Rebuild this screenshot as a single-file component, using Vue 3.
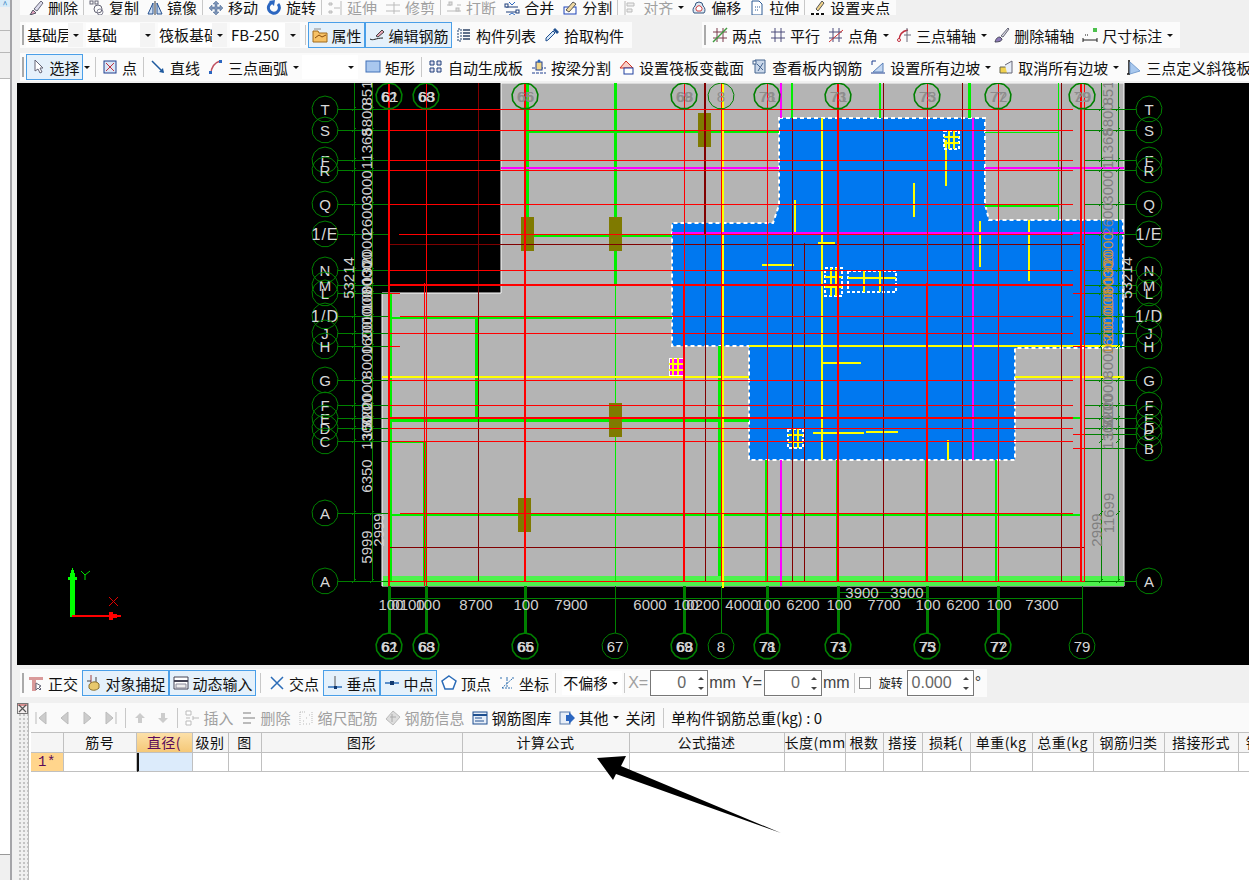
<script setup>
// toolbar icons, 16x16
const icons = {
  del: '<path d="M2 15l3-5 3 3z" fill="#e6a6c0" stroke="#556"/><path d="M6 9l7-8 2 2-6 8z" fill="#dde" stroke="#667"/>',
  copy: '<circle cx="9" cy="9" r="4" fill="none" stroke="#667"/><circle cx="11" cy="12" r="3" fill="none" stroke="#889"/><rect x="1" y="1" width="3" height="3" fill="#fff" stroke="#667"/><rect x="6" y="1" width="3" height="3" fill="#fff" stroke="#667"/>',
  mirror: '<path d="M8 1v14" stroke="#333"/><path d="M6 3v11H1zM10 3v11h5z" fill="#cfe0f5" stroke="#25508f"/>',
  move: '<path d="M8 1l3 3H9v3h3V5l3 3-3 3V9H9v3h2l-3 3-3-3h2V9H4v2L1 8l3-3v2h3V4H5z" fill="#7c93b6" stroke="#4b6a94" stroke-width=".5"/>',
  rotate: '<path d="M12 4a5.5 5.5 0 1 1-6-1.5" fill="none" stroke="#2b66c0" stroke-width="3"/><path d="M3 1l6-1-1 6z" fill="#2b66c0"/>',
  extend: '<path d="M2 3h3v2H2zM2 11h3v2H2zM7 8h6M14 1v14" stroke="#bbb" fill="#ddd"/>',
  trim: '<path d="M1 5h14M1 11h14M9 2v12" stroke="#bbb" fill="none"/>',
  brk: '<path d="M1 5h4M11 5h4M1 11h14" stroke="#bbb" fill="none"/><rect x="3" y="2" width="3" height="3" fill="#ddd" stroke="#bbb"/><rect x="10" y="8" width="3" height="3" fill="#ddd" stroke="#bbb"/>',
  merge: '<path d="M2 7h12M2 12h12" stroke="#1f3f7a"/><path d="M5 2l3 3 3-3M5 15l3-2 3 2" stroke="#2b66c0" fill="none"/><rect x="1" y="4" width="3" height="3" fill="#fff" stroke="#1f3f7a"/><rect x="12" y="10" width="3" height="3" fill="#fff" stroke="#1f3f7a"/>',
  split: '<rect x="2" y="7" width="12" height="7" fill="none" stroke="#1d43b8"/><path d="M4 10l7-8 3 2-7 8z" fill="#f0d9a0" stroke="#555"/>',
  align: '<path d="M2 1v14" stroke="#bbb"/><path d="M4 3h7v3H4zM4 9h5v3H4z" fill="#eee" stroke="#bbb"/>',
  offset: '<path d="M3 13a5 5 0 0 1 1-7 4 4 0 0 1 8 0 5 5 0 0 1 1 7z" fill="#dce7f2" stroke="#35557f"/><path d="M6 11a3 3 0 1 1 4 0z" fill="#fff" stroke="#d04040"/>',
  stretch: '<path d="M3 1h7l3 3v11H3z" fill="#fff" stroke="#2c5a94"/><path d="M6 7h5M6 10h3" stroke="#2c5a94" stroke-dasharray="1 1"/>',
  gripset: '<path d="M6 9l6-8 2 2-6 8z" fill="#f2d48a" stroke="#555"/><path d="M1 14h3M6 14h3M11 14h3" stroke="#111" stroke-width="2"/>',
  attr: '<path d="M1 4h5l1 2h8v9H1z" fill="#f7c266" stroke="#a06a1c"/><path d="M3 11l4-3 3 2 4-2" fill="none" stroke="#8a4c0c"/><path d="M2 2h7" stroke="#8a8a8a"/>',
  rebar: '<path d="M1 12c3 2 6-1 13-1" fill="none" stroke="#222"/><path d="M7 9l6-6 2 2-6 5z" fill="#e7a4b4" stroke="#444"/>',
  list: '<path d="M2 2h3v12H2z" fill="none" stroke="#1d3e6d" stroke-dasharray="2 1"/><path d="M7 3h7M7 6h7M7 9h7M7 12h7" stroke="#60708a" stroke-width="2"/>',
  pick: '<path d="M2 14l2-1 7-7-2-2-7 7z" fill="#d8e8f8" stroke="#20508f"/><path d="M9 3l2-2 4 4-2 2z" fill="#20508f"/>',
  two: '<path d="M1 5h14M1 11h14M5 1v14M11 1v14" stroke="#7a3a4a"/><path d="M1 15L15 1" stroke="#3f9a3f" stroke-width="1.5"/>',
  par: '<path d="M1 5h14M1 11h14M5 1v14M11 1v14" stroke="#4a4a7a"/>',
  ang: '<path d="M1 5h13M1 11h13M5 1v14M11 1v14" stroke="#4a4a7a"/><path d="M1 15L15 3" stroke="#d03030"/>',
  arc3: '<path d="M3 14c0-7 3-10 9-11" fill="none" stroke="#c03040" stroke-width="1.5"/><path d="M8 8h7M11 1v14" stroke="#6a6a7a"/><circle cx="3" cy="13" r="1.5" fill="#fff" stroke="#c03040"/>',
  brush: '<path d="M1 15c1-4 3-5 5-5l2 2c0 2-3 3-7 3z" fill="#8d7ab8" stroke="#445"/><path d="M7 9l7-8 1 1-6 8z" fill="#d8d8e0" stroke="#667"/>',
  dim: '<path d="M1 13h14M1 11v4M15 11v4" stroke="#222"/><path d="M3 8h3" stroke="#111" stroke-dasharray="1 1"/><rect x="11" y="1" width="4" height="4" fill="#4cc04c"/>',
  cursor: '<path d="M5 1v11l3-2 2 4 2-1-2-4h3z" fill="#fff" stroke="#667"/>',
  point: '<rect x="2" y="2" width="12" height="12" fill="#dbe6f5" stroke="#1f3f8f"/><path d="M4 4l8 8M12 4l-8 8" stroke="#c03040"/>',
  line: '<path d="M2 2l11 11" stroke="#1f5a9f" stroke-width="1.5"/><path d="M14 14l-5-1 4-4z" fill="#1f5a9f"/>',
  arc: '<path d="M3 15c0-7 3-11 9-13" fill="none" stroke="#c05060" stroke-width="1.5"/><rect x="1" y="12" width="3" height="3" fill="#2b66c0"/><rect x="11" y="1" width="3" height="3" fill="#2b66c0"/>',
  rect: '<rect x="1" y="2" width="14" height="11" fill="#a9c7ee" stroke="#4070b8"/>',
  four: '<path d="M2 2h4v4H2zM9 2h4v4H9zM2 9h4v4H2zM9 9h4v4H9z" fill="#dde" stroke="#1f3f7a"/>',
  beam: '<path d="M1 9h14M1 14h14" stroke="#1f3f8f" stroke-dasharray="3 1"/><rect x="5" y="3" width="6" height="8" fill="#f2d78a" stroke="#1f3f8f"/><circle cx="8" cy="2" r="1.5" fill="#2b66c0"/>',
  sect: '<path d="M1 9l6-7 7 7z" fill="#f9d0c8" stroke="#d03020"/><rect x="5" y="9" width="9" height="6" fill="#fff" stroke="#2040a0"/>',
  view: '<path d="M3 1h10v13H3z" fill="#cad8ea" stroke="#45648f"/><path d="M5 5l6 6M11 4l-5 8" stroke="#45648f"/><rect x="1" y="2" width="3" height="3" fill="#fff" stroke="#45648f"/>',
  slope: '<path d="M2 2h4M2 2v4M1 14h14" stroke="#1f3f8f"/><path d="M3 13L13 4v9z" fill="#c4d8f2" stroke="#5a80b8"/>',
  unslope: '<path d="M2 8h8v6H2z" fill="#f2d24f" stroke="#665"/><path d="M7 6l7-4v12H9" fill="#e8eef8" stroke="#667"/>',
  tri: '<path d="M3 1v14M1 15h3" stroke="#111" stroke-width="1.5"/><path d="M4 3l10 9-10 3z" fill="#a8c8ee" stroke="#7aa0d0"/>',
  ortho: '<path d="M1 2h14v3H8v11H4V5H1z" fill="#d99a9a"/><path d="M8 8v7l2-2 2 2 1-1-2-2 2-1z" fill="#fff" stroke="#667"/>',
  snap: '<path d="M5 0v9" stroke="#a04040"/><path d="M1 6h4M10 2v7" stroke="#444"/><path d="M3 10c2-4 8-4 10-1v4c-3 3-8 3-10 0z" fill="#e8c86c" stroke="#8a7030"/>',
  dyn: '<path d="M1 2h14v12H1z" fill="#fff" stroke="#445"/><path d="M1 6h14" stroke="#445" stroke-width="2"/><path d="M3 9h10v4H3z" fill="#eee" stroke="#889"/>',
  cross: '<path d="M2 2l12 12M14 2L2 14" stroke="#2b6cb8" stroke-width="1.5"/>',
  perp: '<path d="M1 12h14" stroke="#2b6cb8" stroke-width="1.5"/><path d="M8 1v11" stroke="#555"/><rect x="7" y="11" width="3" height="3" fill="#123a70"/>',
  mid: '<path d="M1 8h14" stroke="#2b6cb8" stroke-width="1.5"/><rect x="6" y="6" width="4" height="4" fill="#123a70"/>',
  vertex: '<path d="M8 1l7 5-3 8H4L1 6z" fill="#fff" stroke="#2b6cb8" stroke-width="1.5"/>',
  coord: '<path d="M1 3h2M7 3h2M13 3h2M3 13h10M8 4v9M13 4L3 13" stroke="#3070b0" stroke-dasharray="2 1" fill="none"/>',
  first: '<path d="M3 2v12M13 2L6 8l7 6z" fill="#ccc" stroke="#bbb"/>',
  prev: '<path d="M12 2L5 8l7 6z" fill="#ccc" stroke="#bbb"/>',
  next: '<path d="M4 2l7 6-7 6z" fill="#ccc" stroke="#bbb"/>',
  last: '<path d="M13 2v12M3 2l7 6-7 6z" fill="#ccc" stroke="#bbb"/>',
  up: '<path d="M8 3l5 5h-3v5H6V8H3z" fill="#ccc"/>',
  down: '<path d="M8 13l5-5h-3V3H6v5H3z" fill="#ccc"/>',
  ins: '<path d="M2 1h5v4H2zM2 11h5v4H2z" fill="#fff" stroke="#bbb"/><path d="M9 8h6M9 6v4M2 8h4" stroke="#bbb"/>',
  rem: '<path d="M2 3h8M2 13h8M2 8h12" stroke="#bbb" stroke-width="2"/>',
  scale: '<path d="M2 2v13M2 2h5M5 14h1M8 14h1M11 14h1M5 11h1M8 8h1M11 5h1M14 2v12" stroke="#bbb" stroke-dasharray="1 1"/>',
  info: '<path d="M8 1l7 6-7 8-7-6z" fill="#ddd" stroke="#bbb"/><path d="M5 7h6M7 4v8" stroke="#aaa"/>',
  lib: '<rect x="1" y="2" width="14" height="12" fill="#e7eef8" stroke="#1f4f8f"/><path d="M1 5h14" stroke="#1f4f8f" stroke-width="2"/><path d="M3 8h7M3 11h9" stroke="#1f4f8f"/>',
  other: '<rect x="1" y="2" width="10" height="12" fill="#e7eef8" stroke="#5a7aa8"/><path d="M7 5h3V2l6 6-6 6v-3H7z" fill="#2b66c0"/>'
}

const item = (text, icon, extra = {}) => ({ text, icon, ...extra })
const sep = { k: 'sep' }
const sepWide = { k: 'sep', wide: true }
const caret = { k: 'caret' }
const handle = { k: 'handle' }

const bar1 = [
  item('删除', 'del'), sep, item('复制', 'copy'), item('镜像', 'mirror'), sep,
  item('移动', 'move'), item('旋转', 'rotate'), sep,
  item('延伸', 'extend', { off: true }), item('修剪', 'trim', { off: true }), sep,
  item('打断', 'brk', { off: true }), item('合并', 'merge'), item('分割', 'split'), sep,
  item('对齐', 'align', { off: true }), caret, item('偏移', 'offset'), item('拉伸', 'stretch'), sep,
  item('设置夹点', 'gripset')
]
const bar2 = [
  handle,
  { k: 'combo', text: '基础层', w: 57 },
  { k: 'combo', text: '基础', w: 69 },
  { k: 'combo', text: '筏板基础', w: 69 },
  { k: 'combo', text: 'FB-250', w: 70 },
  sep,
  item('属性', 'attr', { on: true }), item('编辑钢筋', 'rebar', { on: true }),
  item('构件列表', 'list'), item('拾取构件', 'pick')
]
const bar2b = [
  handle,
  item('两点', 'two'), item('平行', 'par'), item('点角', 'ang'), caret,
  item('三点辅轴', 'arc3'), caret, item('删除辅轴', 'brush'), item('尺寸标注', 'dim'), caret
]
const bar3 = [
  handle,
  item('选择', 'cursor', { on: true }), caret, sep, item('点', 'point'), sep,
  item('直线', 'line'), item('三点画弧', 'arc'), caret,
  { k: 'combo', text: '', w: 56 },
  item('矩形', 'rect'), sep, item('自动生成板', 'four'), item('按梁分割', 'beam'),
  item('设置筏板变截面', 'sect'), item('查看板内钢筋', 'view'), item('设置所有边坡', 'slope'), caret,
  item('取消所有边坡', 'unslope'), caret, item('三点定义斜筏板', 'tri')
]
const statusBar = [
  handle,
  item('正交', 'ortho'), item('对象捕捉', 'snap', { on: true }), item('动态输入', 'dyn', { on: true }), sepWide,
  item('交点', 'cross'), item('垂点', 'perp', { on: true }), item('中点', 'mid', { on: true }),
  item('顶点', 'vertex'), item('坐标', 'coord'), sep,
  { k: 'combo', text: '不偏移', w: 60 }, sep,
  { k: 'lbl', text: 'X=', off: true }, { k: 'spin', text: '0', w: 58 }, { k: 'lbl', text: 'mm Y=' },
  { k: 'spin', text: '0', w: 58 }, { k: 'lbl', text: 'mm' }, sep,
  { k: 'check' }, { k: 'lbl', text: '旋转', small: true },
  { k: 'spin', text: '0.000', w: 67 }, { k: 'lbl', text: '°' }
]
const panelBar = [
  item('', 'first', { off: true }), item('', 'prev', { off: true }), item('', 'next', { off: true }), item('', 'last', { off: true }), sep,
  item('', 'up', { off: true }), item('', 'down', { off: true }), sep,
  item('插入', 'ins', { off: true }), item('删除', 'rem', { off: true }), item('缩尺配筋', 'scale', { off: true }),
  item('钢筋信息', 'info', { off: true }), item('钢筋图库', 'lib'), item('其他', 'other'), caret,
  item('关闭', ''), sepWide, { k: 'lbl', text: '单构件钢筋总重(kg) : 0' }
]
const bars = [
  { id: 'b1', items: bar1 },
  { id: 'b2', items: bar2 },
  { id: 'b2b', items: bar2b },
  { id: 'b3', items: bar3 },
  { id: 'bs', items: statusBar }
]
const barOf = id => bars.find(b => b.id === id).items

const heads = ['', '筋号', '直径(', '级别', '图', '图形', '计算公式', '公式描述', '长度(mm', '根数', '搭接', '损耗(', '单重(kg', '总重(kg', '钢筋归类', '搭接形式', '钢']

// canvas geometry uses screen coordinates, viewBox starts at the canvas corner
const rowsL = [['T', 109], ['S', 130], ['F', 160], ['R', 170], ['Q', 204], ['1/E', 234], ['N', 270], ['M', 285], ['L', 293], ['1/D', 316], ['J', 333], ['H', 346], ['G', 380], ['F', 405], ['E', 418], ['D', 428], ['C', 441], ['A', 513], ['A', 581]]
const rowsR = [...rowsL.slice(0, 16), ['C', 434], ['B', 448], ['A', 581]]
const colsTop = [[389, '62', '61'], [426, '68', '63'], [525, '65', '66'], [684, '69', '68'], [721, '8'], [767, '78', '71'], [838, '73', '71'], [927, '75', '73'], [998, '77', '72'], [1082, '79', '29']]
const colsBottom = [[389, '62', '61'], [426, '68', '63'], [525, '65', '66'], [615, '67'], [684, '69', '68'], [721, '8'], [767, '78', '71'], [838, '73', '71'], [927, '75', '73'], [998, '77', '72'], [1082, '79']]

const octagon = (cx, cy, r = 13) => {
  const pts = []
  for (let i = 0; i < 13; i++) {
    const a = (i / 13) * Math.PI * 2 - Math.PI / 2
    pts.push((cx + r * Math.cos(a)).toFixed(1) + ',' + (cy + r * Math.sin(a)).toFixed(1))
  }
  return pts.join(' ')
}

const G = '#00ee00'
const DG = '#008000'
const Y = '#ffff00'
const M = '#ff00ff'
const R = '#ff0000'
const D = '#800000'

// [x1, y1, x2, y2, colour, width]
const lines = [
  // dimension and leader lines
  [354, 83, 354, 581, DG, 1], [372, 83, 372, 581, DG, 1], [1101, 83, 1101, 581, DG, 1], [1118, 83, 1118, 581, DG, 1],
  [389, 598, 1082, 598, DG, 1], [838, 592, 927, 592, DG, 1],
  ...rowsL.map(r => [338, r[1], 388, r[1], DG, 1]),
  ...rowsR.map(r => [1085, r[1], 1136, r[1], DG, 1]),
  ...colsBottom.map(c => [c[0], 586, c[0], 633, DG, c[2] ? 3 : 1]),
  // green walls
  [527, 83, 527, 217, G, 3], [524, 251, 524, 581, G, 1], [615, 83, 615, 285, G, 3], [615, 285, 615, 581, G, 1],
  [476, 316, 476, 418, G, 3], [391, 293, 391, 581, G, 2], [424, 441, 424, 581, G, 3],
  [719, 346, 719, 576, G, 3], [766, 460, 766, 581, G, 3], [837, 460, 837, 581, G, 2], [926, 460, 926, 581, G, 2], [996, 460, 996, 581, G, 2],
  [792, 83, 792, 118, G, 2], [880, 83, 880, 118, G, 2], [969, 83, 969, 118, G, 3], [1058, 83, 1058, 220, G, 1],
  [527, 132, 779, 132, G, 2], [985, 132, 1058, 132, G, 1], [985, 206, 1058, 206, G, 2],
  [527, 236, 672, 236, G, 2], [390, 318, 672, 318, G, 2], [390, 420, 749, 420, G, 3], [1015, 418, 1080, 418, G, 2],
  [390, 442, 424, 442, G, 2], [390, 515, 1080, 515, G, 2],
  // yellow and magenta
  [723, 83, 723, 588, Y, 2], [382, 377, 749, 377, Y, 2], [1015, 377, 1124, 377, Y, 2], [749, 346, 1120, 346, Y, 2],
  [822, 118, 822, 460, Y, 2], [795, 200, 795, 234, Y, 2], [914, 183, 914, 217, Y, 2], [946, 140, 946, 186, Y, 2],
  [980, 221, 980, 267, Y, 2], [1029, 220, 1029, 281, Y, 2], [818, 243, 835, 243, Y, 2], [762, 265, 794, 265, Y, 2],
  [822, 363, 861, 363, Y, 2], [813, 433, 864, 433, Y, 2], [866, 432, 898, 432, Y, 2], [948, 440, 948, 460, Y, 2],
  [501, 168, 779, 168, M, 2], [985, 168, 1124, 168, M, 2], [672, 233, 1124, 233, M, 2],
  [973, 118, 973, 460, M, 2], [781, 83, 781, 118, M, 2], [781, 460, 781, 586, M, 2]
]

const topLines = [
  // dark red
  [478, 83, 478, 581, D, 1], [705, 83, 705, 234, D, 2], [705, 234, 705, 581, D, 1], [792, 118, 792, 581, D, 1], [804, 243, 804, 581, D, 1],
  [883, 83, 883, 581, D, 1], [962, 83, 962, 581, D, 1], [1061, 83, 1061, 581, D, 1],
  [388, 244, 1085, 244, D, 1], [388, 547, 1085, 547, D, 1],
  // red vertical grid
  [389, 83, 389, 586, R, 2], [426, 83, 426, 586, R, 1], [424, 283, 424, 586, R, 1], [525, 83, 525, 581, R, 2],
  [684, 83, 684, 285, R, 1], [684, 285, 684, 581, R, 2], [721, 83, 721, 581, R, 1], [767, 83, 767, 581, R, 1],
  [838, 83, 838, 581, R, 2], [927, 83, 927, 283, R, 1], [927, 283, 927, 581, R, 2], [998, 83, 998, 581, R, 1],
  [1081, 83, 1081, 581, R, 2], [1084, 83, 1084, 581, R, 1],
  // red horizontal grid
  ...[109, 130, 160, 170, 204, 270, 333, 380, 405, 428, 441].map(y => [388, y, 1073, y, R, 1]),
  [399, 234, 1073, 234, R, 1], [388, 285, 1073, 285, R, 2], [400, 316, 1073, 316, R, 1], [388, 418, 1073, 418, R, 2], [400, 513, 1073, 513, R, 1],
  [388, 293, 400, 293, R, 1], [388, 346, 400, 346, R, 1], [1073, 293, 1085, 293, R, 1], [1073, 346, 1085, 346, R, 1],
  [1073, 434, 1085, 434, R, 1], [1073, 448, 1085, 448, R, 1], [388, 581, 1085, 581, R, 1]
]

const ticks = [354, 372, 1101, 1118].flatMap(x => rowsL.map(r => [x - 2, r[1] + 2, x + 2, r[1] - 2]))

const columns = [[698, 113], [521, 217], [609, 217], [609, 403], [518, 498]]

// hatched opening boxes: [x, y, w, h]
const hatches = [[944, 131, 15, 18], [825, 268, 17, 28], [848, 271, 48, 21], [788, 429, 15, 19]]

const dimStack = [[93, '851'], [119, '5800'], [145, '1368'], [165, '1'], [187, '3000'], [219, '2600'], [249, '2000'], [268, '1300'], [278, '8000'], [294, '1000'], [306, '1000'], [325, '2000'], [338, '1600'], [362, '8000'], [393, '2000'], [411, '3200'], [423, '1500'], [433, '1300']]
const bottomDims = [[391, '100'], [408, '0100'], [428, '100'], [476, '8700'], [526, '100'], [571, '7900'], [650, '6000'], [686, '100'], [703, '0200'], [742, '4000'], [768, '100'], [803, '6200'], [839, '100'], [884, '7700'], [928, '100'], [963, '6200'], [999, '100'], [1042, '7300']]
const rot = (x, y) => `rotate(-90 ${x} ${y})`
const orangeAt = y => y > 225 && y < 345
</script>

<template>
  <div class="app">
    <aside class="side">
      <div class="side-tab">^</div>
      <div class="side-btn first"></div>
      <div class="side-btn"></div>
      <div class="side-btn last"></div>
      <div class="side-white"></div>
      <div class="side-foot"></div>
    </aside>

    <div class="main">
      <div class="row row1">
        <div class="bar">
          <template v-for="(it, i) in barOf('b1')" :key="i">
            <span v-if="it.k === 'sep'" class="sep"></span>
            <span v-else-if="it.k === 'caret'" class="caret"></span>
            <span v-else class="btn" :class="{ off: it.off }">
              <svg class="ic" viewBox="0 0 16 16" v-html="icons[it.icon]"></svg>{{ it.text }}
            </span>
          </template>
        </div>
      </div>

      <div class="row row2">
        <div class="bar bar-left">
          <template v-for="(it, i) in barOf('b2')" :key="i">
            <span v-if="it.k === 'handle'" class="handle"></span>
            <span v-else-if="it.k === 'sep'" class="sep"></span>
            <span v-else-if="it.k === 'combo'" class="combo" :style="{ width: it.w + 'px' }">
              <span class="combo-text">{{ it.text }}</span><span class="combo-arrow"><i class="caret"></i></span>
            </span>
            <span v-else class="btn" :class="{ on: it.on }">
              <svg class="ic" viewBox="0 0 16 16" v-html="icons[it.icon]"></svg>{{ it.text }}
            </span>
          </template>
        </div>
        <div class="bar bar-right">
          <template v-for="(it, i) in barOf('b2b')" :key="i">
            <span v-if="it.k === 'handle'" class="handle"></span>
            <span v-else-if="it.k === 'caret'" class="caret"></span>
            <span v-else class="btn">
              <svg class="ic" viewBox="0 0 16 16" v-html="icons[it.icon]"></svg>{{ it.text }}
            </span>
          </template>
        </div>
      </div>

      <div class="row row3">
        <div class="bar bar-full">
          <template v-for="(it, i) in barOf('b3')" :key="i">
            <span v-if="it.k === 'handle'" class="handle"></span>
            <span v-else-if="it.k === 'sep'" class="sep"></span>
            <span v-else-if="it.k === 'caret'" class="caret"></span>
            <span v-else-if="it.k === 'combo'" class="combo" :style="{ width: it.w + 'px' }">
              <span class="combo-text">{{ it.text }}</span><span class="combo-arrow white"><i class="caret"></i></span>
            </span>
            <span v-else class="btn" :class="{ on: it.on }">
              <svg class="ic" viewBox="0 0 16 16" v-html="icons[it.icon]"></svg>{{ it.text }}
            </span>
          </template>
        </div>
      </div>

      <svg class="cad" viewBox="17 83 1232 582" width="1232" height="582">
        <polygon points="501,83 1124,83 1124,586 382,586 382,293 501,293" fill="#b4b4b4" stroke="#fff" stroke-width="1" />
        <rect x="383" y="576" width="741" height="10" fill="#4df24d" />
        <polygon
          points="779,118 985,118 985,204 989,220 1123,220 1123,348 1015,348 1015,460 749,460 749,346 672,346 672,223 773,223 779,205"
          fill="#0078f0" stroke="#fff" stroke-width="2" stroke-dasharray="4 3"
        />
        <g shape-rendering="crispEdges">
          <line v-for="(l, i) in lines" :key="i" :x1="l[0]" :y1="l[1]" :x2="l[2]" :y2="l[3]" :stroke="l[4]" :stroke-width="l[5]" />
          <rect v-for="(c, i) in columns" :key="'c' + i" :x="c[0]" :y="c[1]" width="13" height="34" fill="#7f7a00" />
          <g v-for="(h, i) in hatches" :key="'h' + i">
            <rect :x="h[0]" :y="h[1]" :width="h[2]" :height="h[3]" fill="none" stroke="#fff" stroke-width="1.5" stroke-dasharray="3 2" />
            <line :x1="h[0]" :y1="h[1] + h[3] / 3" :x2="h[0] + h[2]" :y2="h[1] + h[3] / 3" stroke="#ff0" stroke-width="2" />
            <line :x1="h[0]" :y1="h[1] + h[3] * 2 / 3" :x2="h[0] + h[2]" :y2="h[1] + h[3] * 2 / 3" stroke="#ff0" stroke-width="2" />
            <line :x1="h[0] + h[2] / 3" :y1="h[1]" :x2="h[0] + h[2] / 3" :y2="h[1] + h[3]" stroke="#ff0" stroke-width="2" />
            <line :x1="h[0] + h[2] * 2 / 3" :y1="h[1]" :x2="h[0] + h[2] * 2 / 3" :y2="h[1] + h[3]" stroke="#ff0" stroke-width="2" />
          </g>
          <rect x="669" y="358" width="14" height="17" fill="#ff00ff" stroke="#fff" />
          <path d="M669 364h14M669 370h14M673 358v17M678 358v17" stroke="#ff0" stroke-width="1.5" fill="none" />
          <line v-for="(l, i) in topLines" :key="'t' + i" :x1="l[0]" :y1="l[1]" :x2="l[2]" :y2="l[3]" :stroke="l[4]" :stroke-width="l[5]" />
          <line v-for="(t, i) in ticks" :key="'k' + i" :x1="t[0]" :y1="t[1]" :x2="t[2]" :y2="t[3]" stroke="#008000" />
        </g>

        <!-- axis bubbles -->
        <g v-for="(r, i) in rowsL" :key="'l' + i">
          <polygon :points="octagon(325, r[1])" class="bubble" />
          <text x="325" :y="r[1]" class="lab" :class="{ spaced: r[0].length > 1 }">{{ r[0] }}</text>
        </g>
        <g v-for="(r, i) in rowsR" :key="'r' + i">
          <polygon :points="octagon(1149, r[1])" class="bubble" />
          <text x="1149" :y="r[1]" class="lab" :class="{ spaced: r[0].length > 1 }">{{ r[0] }}</text>
        </g>
        <g v-for="(c, i) in colsTop" :key="'t' + i">
          <polygon :points="octagon(c[0], 96)" class="bubble" :class="{ heavy: c[2] }" />
          <text :x="c[0]" y="96" class="lab" :class="{ 'dim-lab': c[0] > 501 }">{{ c[1] }}</text>
          <text v-if="c[2]" :x="c[0] + 1" y="96" class="lab" :class="{ 'dim-lab': c[0] > 501 }">{{ c[2] }}</text>
        </g>
        <g v-for="(c, i) in colsBottom" :key="'b' + i">
          <polygon :points="octagon(c[0], 646)" class="bubble" :class="{ heavy: c[2] }" />
          <text :x="c[0]" y="646" class="lab">{{ c[1] }}</text>
          <text v-if="c[2]" :x="c[0] + 1" y="646" class="lab">{{ c[2] }}</text>
        </g>

        <!-- dimension texts -->
        <text v-for="(d, i) in dimStack" :key="'sl' + i" x="366" :y="d[0]" class="dimt" :transform="rot(366, d[0])">{{ d[1] }}</text>
        <text v-for="(d, i) in dimStack" :key="'sr' + i" x="1107" :y="d[0]" class="dimt" :class="orangeAt(d[0]) ? 'orange' : 'grey'" :transform="rot(1107, d[0])">{{ d[1] }}</text>
        <text x="348" y="278" class="dimt" :transform="rot(348, 278)">53214</text>
        <text x="1126" y="278" class="dimt" :transform="rot(1126, 278)">53214</text>
        <text x="366" y="476" class="dimt" :transform="rot(366, 476)">6350</text>
        <text x="366" y="547" class="dimt" :transform="rot(366, 547)">5999</text>
        <text x="378" y="530" class="dimt" :transform="rot(378, 530)">2999</text>
        <text x="1096" y="530" class="dimt grey" :transform="rot(1096, 530)">2999</text>
        <text x="1108" y="513" class="dimt grey" :transform="rot(1108, 513)">11699</text>
        <text v-for="(d, i) in bottomDims" :key="'bd' + i" :x="d[0]" y="604" class="dimt">{{ d[1] }}</text>
        <text x="862" y="592" class="dimt">3900</text>
        <text x="907" y="592" class="dimt">3900</text>

        <!-- ucs gizmo -->
        <g shape-rendering="crispEdges">
          <path d="M70 617V580h-2v-3h2v-4h1v-3h1v-2h1v2h1v3h1v4h2v3h-2V617z" fill="#00ff00" />
          <path d="M72 615h37v-3h4v2h4v1h4v2h-4v1h-4v2h-4v-3H72z" fill="#ff0000" />
        </g>
        <path d="M81 571l4 4 5-4M85 575v5" stroke="#00e000" fill="none" />
        <path d="M109 597l9 9M118 597l-9 9" stroke="#e00000" fill="none" />
      </svg>

      <div class="row rows">
        <div class="bar">
          <template v-for="(it, i) in barOf('bs')" :key="i">
            <span v-if="it.k === 'handle'" class="handle tight"></span>
            <span v-else-if="it.k === 'sep'" class="sep" :class="{ wide: it.wide }"></span>
            <span v-else-if="it.k === 'combo'" class="combo offset" :style="{ width: it.w + 'px' }">
              <span class="combo-text">{{ it.text }}</span><span class="combo-arrow white"><i class="caret"></i></span>
            </span>
            <span v-else-if="it.k === 'lbl'" class="lbl" :class="{ small: it.small, off: it.off }">{{ it.text }}</span>
            <span v-else-if="it.k === 'spin'" class="spin" :style="{ width: it.w + 'px' }">
              <span class="spin-val">{{ it.text }}</span>
              <span class="spin-arrows"><i class="up"></i><i class="dn"></i></span>
            </span>
            <span v-else-if="it.k === 'check'" class="check"></span>
            <span v-else class="btn" :class="{ on: it.on }">
              <svg class="ic" viewBox="0 0 16 16" v-html="icons[it.icon]"></svg>{{ it.text }}
            </span>
          </template>
        </div>
      </div>

      <section class="panel">
        <div class="grip">
          <svg class="close" viewBox="0 0 11 11">
            <rect x=".5" y=".5" width="10" height="10" fill="#f4eeee" stroke="#777" />
            <path d="M1 1h9v2H1z" fill="#d89090" />
            <path d="M2 2l7 7M9 2l-7 7" stroke="#555" stroke-width="1.2" />
          </svg>
        </div>
        <div class="panel-body">
          <div class="pbar">
            <template v-for="(it, i) in panelBar" :key="i">
              <span v-if="it.k === 'sep'" class="sep" :class="{ wide: it.wide }"></span>
              <span v-else-if="it.k === 'caret'" class="caret"></span>
              <span v-else-if="it.k === 'lbl'" class="lbl total">{{ it.text }}</span>
              <span v-else class="btn" :class="{ off: it.off, nav: !it.text }">
                <svg v-if="it.icon" class="ic" viewBox="0 0 16 16" v-html="icons[it.icon]"></svg>{{ it.text }}
              </span>
            </template>
          </div>
          <div class="grid">
            <div v-for="(h, i) in heads" :key="i" class="th" :class="{ sel: i === 2 }">{{ h }}</div>
            <div v-for="(h, i) in heads" :key="'c' + i" class="td" :class="{ rowno: i === 0, cur: i === 2 }">{{ i === 0 ? '1*' : '' }}</div>
          </div>
        </div>
      </section>
    </div>

    <svg class="pointer" viewBox="0 0 1249 880" width="1249" height="880">
      <polygon points="597,758 626,756 621,766 781,833 616,774 613,780" fill="#000" />
    </svg>
  </div>
</template>

<style>
html, body { margin: 0; background: #f0f0f0; }
</style>

<style scoped>
.app {
  position: relative;
  display: flex;
  width: 1249px;
  height: 880px;
  overflow: hidden;
  background: #f0f0f0;
  color: #111;
  font-family: "Noto Sans CJK SC", "Liberation Sans", sans-serif;
  font-size: 15px;
}
.side {
  display: flex;
  flex-direction: column;
  flex: none;
  width: 10px;
  border-right: 2px solid #a4a4a8;
}
.side-tab {
  height: 7px;
  background: #d8ebf8;
  color: #2f7fc0;
  font-size: 9px;
  line-height: 9px;
  text-align: center;
  overflow: hidden;
}
.side-btn { background: #f0f0f0; border-bottom: 1px solid #b8b8b8; height: 22px; box-sizing: border-box; }
.side-btn.first { height: 24px; }
.side-btn.last { height: 26px; }
.side-white { flex: 1; background: #fff; }
.side-foot { height: 25px; background: #f0f0f0; border-top: 1px solid #999; }

.main { display: flex; flex-direction: column; flex: 1; min-width: 0; }
.row { display: flex; flex: none; overflow: hidden; }
.row1 { height: 15px; margin: 0 0 7px 8px; }
.row2 { height: 26px; margin: 0 0 5px 8px; }
.row3 { height: 28px; margin: 0 0 2px 8px; }
.rows { height: 28px; margin: 4px 0 0 8px; }

.bar {
  display: flex;
  align-items: center;
  flex: none;
  background: #fbfbfb;
  padding: 0 4px 0 2px;
  white-space: nowrap;
}
.row1 .bar { padding-left: 4px; padding-right: 2px; }
.row1 .sep { margin: 0 1px; }
.bar-right { margin-left: 70px; }
.bar-full { flex: 1; min-width: 0; overflow: hidden; }

.btn {
  display: inline-flex;
  align-items: center;
  gap: 4px;
  flex: none;
  height: 100%;
  padding: 0 4px;
  box-sizing: border-box;
  line-height: 1;
}
.btn.on {
  padding: 0 3.5px;
  background: #e5f1fb;
  outline: 1px solid #4a9fe8;
  outline-offset: -1px;
}
.row2 .btn.on, .row3 .btn.on, .rows .btn.on { height: 26px; }
.off { color: #a0a0a0; }
.ic { width: 16px; height: 16px; flex: none; }

.sep { flex: none; width: 1px; height: 20px; margin: 0 2px; background: #c8c8c8; }
.sep.wide { margin: 0 4px; }
.caret {
  display: inline-block;
  flex: none;
  width: 0;
  height: 0;
  margin: 0 3px 0 1px;
  border-left: 3px solid transparent;
  border-right: 3px solid transparent;
  border-top: 3px solid #111;
}
.handle {
  flex: none;
  width: 2px;
  height: 20px;
  margin: 0 2px 0 0;
  background-image: radial-gradient(#aaa 1px, transparent 1px);
  background-size: 2px 4px;
}
.handle.tight { margin: 0; }
.combo { display: inline-flex; flex: none; height: 24px; margin-right: 3px; background: #fff; overflow: hidden; }
.combo.offset { margin: 0 0 0 4px; }
.combo-text { flex: 1; min-width: 0; overflow: hidden; white-space: nowrap; padding-left: 1px; line-height: 24px; }
.combo-arrow { display: flex; align-items: center; justify-content: center; flex: none; width: 15px; background: #f4f4f4; }
.combo-arrow.white { background: #fff; }
.combo-arrow .caret { margin: 0; }

.lbl {
  flex: none;
  padding: 0 2px 0 1px;
  color: #444;
  font-family: "Liberation Sans", "Noto Sans CJK SC", sans-serif;
  font-size: 16px;
  word-spacing: 2px;
  line-height: 1;
}
.lbl.off { color: #a0a0a0; }
.lbl.small { font-family: "Noto Sans CJK SC", sans-serif; font-size: 12px; padding: 0 4px 0 8px; color: #111; }
.check { flex: none; width: 10px; height: 10px; margin: 0 0 0 2px; border: 1px solid #888; background: #fff; }
.spin {
  display: inline-flex;
  align-items: center;
  flex: none;
  height: 26px;
  border: 1px solid #777;
  background: #fff;
  box-sizing: border-box;
  color: #666;
  font-family: "Liberation Sans", sans-serif;
  font-size: 16px;
}
.spin-val { flex: 1; text-align: right; padding-right: 8px; }
.spin-arrows { display: flex; flex-direction: column; gap: 7px; width: 13px; align-items: center; flex: none; }
.spin-arrows i { width: 0; height: 0; border-left: 3px solid transparent; border-right: 3px solid transparent; }
.spin-arrows .up { border-bottom: 3px solid #444; }
.spin-arrows .dn { border-top: 3px solid #444; }

svg.cad {
  display: block;
  flex: none;
  margin-left: 5px;
  background: #000;
}
.bubble { fill: none; stroke: #008000; stroke-width: 1; }
.bubble.heavy { stroke-width: 1.6; }
.lab {
  fill: #d8d8d8;
  font-family: "Liberation Sans", sans-serif;
  font-size: 15px;
  text-anchor: middle;
  dominant-baseline: central;
}
.lab.spaced { letter-spacing: 1px; font-size: 16px; }
.lab.dim-lab { fill: #8c8c8c; }
.dimt {
  fill: #d0d0d0;
  font-family: "Liberation Sans", sans-serif;
  font-size: 15px;
  text-anchor: middle;
  dominant-baseline: central;
}
.dimt.grey { fill: #808080; }
.dimt.orange { fill: #c8903c; }

.panel { display: flex; flex: 1; min-height: 0; margin: 6px 0 0 5px; }
.grip {
  flex: none;
  width: 12px;
  background-image: radial-gradient(#c4c4c4 1px, transparent 1.2px);
  background-size: 4px 4px;
  background-color: #f0f0f0;
  background-position: 1px 14px;
  border-right: 1px solid #bbb;
  box-sizing: border-box;
}
.close { display: block; width: 11px; height: 11px; }
.panel-body { display: flex; flex-direction: column; flex: 1; min-width: 0; background: #fff; }
.pbar {
  display: flex;
  align-items: center;
  flex: none;
  height: 29px;
  background: #fafafa;
  white-space: nowrap;
}
.pbar .btn { padding: 0 3.5px; }
.pbar .btn.nav { padding: 0 3.75px; }
.total { padding-left: 3px; color: #111; font-size: 15px; word-spacing: 0; font-family: "Noto Sans CJK SC", sans-serif; }

.grid {
  display: grid;
  grid-template-columns: 33px 72.5px 56px 36px 33px 201px 167px 155px 61px 38px 39px 48px 62px 61px 71px 74px 30px;
  grid-auto-rows: 19.5px;
  margin-left: 2px;
  border-top: 1px solid #c0c0c0;
  font-size: 14px;
  letter-spacing: .5px;
}
.th, .td {
  box-sizing: border-box;
  border-right: 1px solid #c0c0c0;
  border-bottom: 1px solid #c0c0c0;
  overflow: hidden;
  white-space: nowrap;
  text-align: center;
  line-height: 18px;
}
.th { background: #f5f5f5; }
.th.sel { background: linear-gradient(#fce0a8, #f5c878); color: #5a0a5a; }
.td.rowno { background: #ffd58c; color: #5a0a5a; font-family: "Liberation Mono", monospace; }
.td.cur { background: #dcebfb; border-left: 2px solid #111; }

.pointer { position: absolute; left: 0; top: 0; pointer-events: none; }
</style>
